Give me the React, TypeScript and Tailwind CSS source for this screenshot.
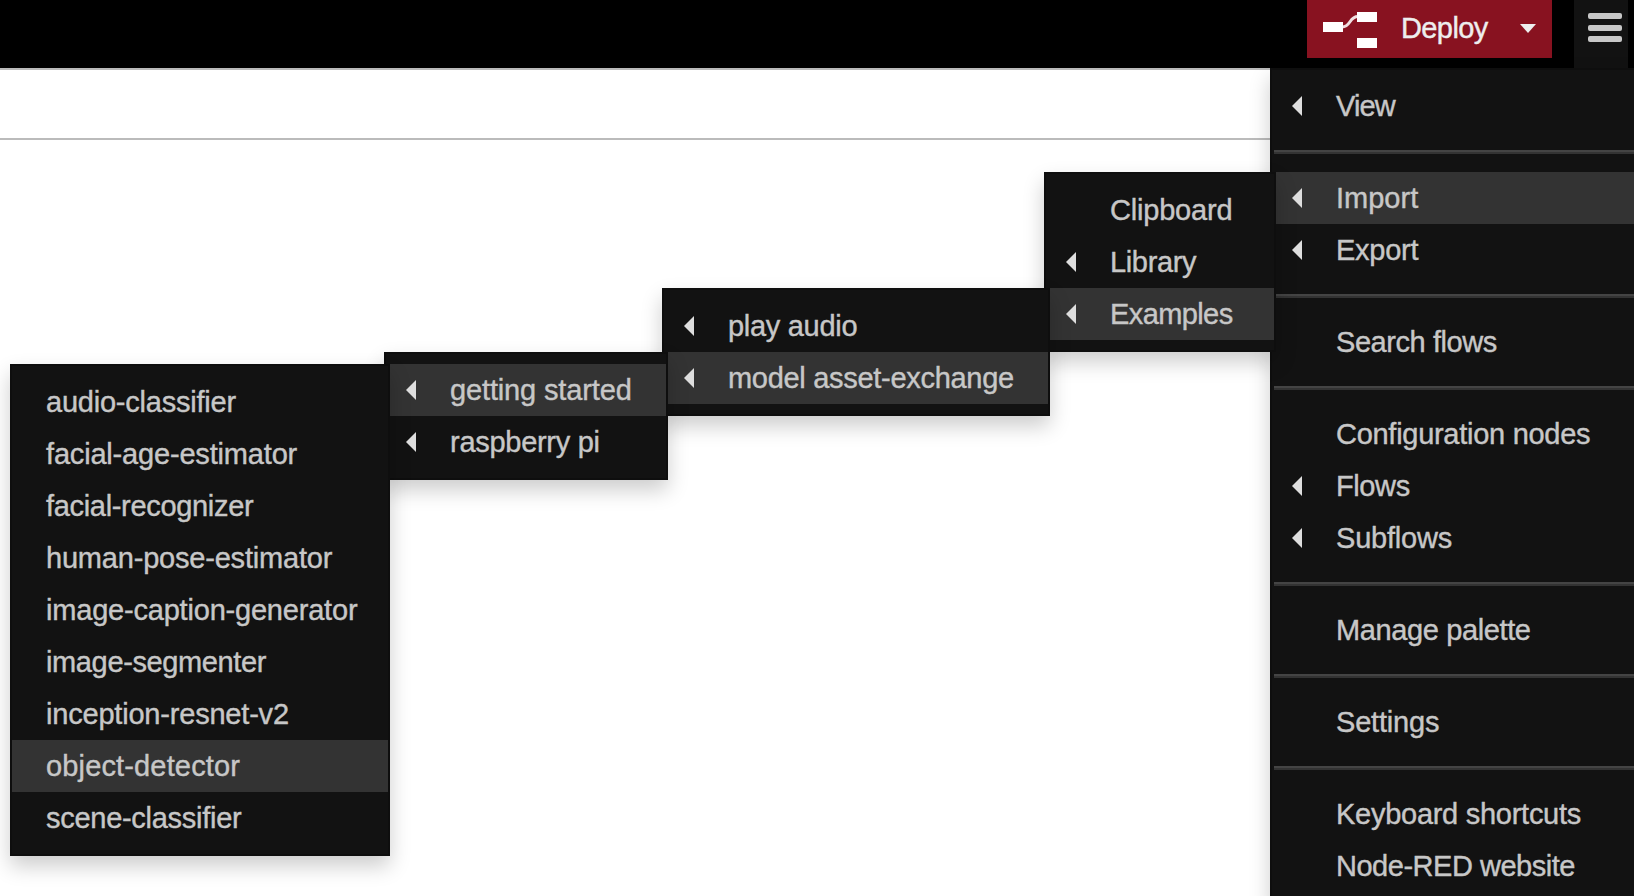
import React from "react";

type Entry = {
  label?: string;
  tracking?: string;
  separator?: boolean;
  arrow?: boolean;
  active?: boolean;
  children?: Entry[];
  plain?: boolean;
};

const separator: Entry = { separator: true };

const examples: Entry[] = [
  { label: "audio-classifier", tracking: "tracking-[-0.22px]" },
  { label: "facial-age-estimator", tracking: "tracking-[-0.18px]" },
  { label: "facial-recognizer", tracking: "tracking-[-0.32px]" },
  { label: "human-pose-estimator", tracking: "tracking-[-0.2px]" },
  { label: "image-caption-generator", tracking: "tracking-[-0.2px]" },
  { label: "image-segmenter", tracking: "tracking-[-0.37px]" },
  { label: "inception-resnet-v2", tracking: "tracking-[-0.2px]" },
  { label: "object-detector", tracking: "tracking-[0.15px]", active: true },
  { label: "scene-classifier", tracking: "tracking-[-0.28px]" },
];

const modelAssets: Entry[] = [
  {
    label: "getting started",
    tracking: "tracking-[-0.14px]",
    arrow: true,
    active: true,
    children: examples,
    plain: true,
  },
  { label: "raspberry pi", tracking: "tracking-[-0.28px]", arrow: true },
];

const exampleGroups: Entry[] = [
  { label: "play audio", tracking: "tracking-[-0.3px]", arrow: true },
  {
    label: "model asset-exchange",
    tracking: "tracking-[-0.3px]",
    arrow: true,
    active: true,
    children: modelAssets,
  },
];

const importMenu: Entry[] = [
  { label: "Clipboard", tracking: "tracking-[-0.2px]" },
  { label: "Library", tracking: "tracking-[-0.35px]", arrow: true },
  {
    label: "Examples",
    tracking: "tracking-[-0.6px]",
    arrow: true,
    active: true,
    children: exampleGroups,
  },
];

const mainMenu: Entry[] = [
  { label: "View", tracking: "tracking-[-0.9px]", arrow: true },
  separator,
  { label: "Import", tracking: "tracking-[0px]", arrow: true, active: true, children: importMenu },
  { label: "Export", tracking: "tracking-[-0.25px]", arrow: true },
  separator,
  { label: "Search flows", tracking: "tracking-[-0.43px]" },
  separator,
  { label: "Configuration nodes", tracking: "tracking-[-0.28px]" },
  { label: "Flows", tracking: "tracking-[-0.4px]", arrow: true },
  { label: "Subflows", tracking: "tracking-[-0.2px]", arrow: true },
  separator,
  { label: "Manage palette", tracking: "tracking-[-0.38px]" },
  separator,
  { label: "Settings", tracking: "tracking-[-0.2px]" },
  separator,
  { label: "Keyboard shortcuts", tracking: "tracking-[-0.27px]" },
  { label: "Node-RED website", tracking: "tracking-[-0.48px]" },
];

const submenuWidths: Record<string, string> = {
  Import: "w-[232px]",
  Examples: "w-[388px]",
  "model asset-exchange": "w-[284px]",
  "getting started": "w-[380px]",
};

function MenuList({ entries, plain, className }: { entries: Entry[]; plain?: boolean; className: string }) {
  return (
    <ul
      className={`absolute border-2 border-[#0e0e0e] bg-[#121212] py-2.5 shadow-[0_10px_20px_rgba(0,0,0,0.2)] ${className}`}
    >
      {entries.map((entry, i) =>
        entry.separator ? (
          <li key={i} className="my-[18px] ml-0.5 h-1 border-t-2 border-[#444] bg-[#333]" />
        ) : (
          <li
            key={i}
            className={`flex h-[52px] items-center whitespace-nowrap ${plain ? "pl-[34px]" : "pl-5"} ${
              entry.active ? "bg-[#333]" : ""
            } ${entry.children ? "relative" : ""}`}
          >
            {!plain && (
              <svg className="mr-[34px] h-5 w-2.5 shrink-0" viewBox="0 0 10 20">
                {entry.arrow && <path d="M0 10L10 0V20Z" fill="#dedede" />}
              </svg>
            )}
            <span className={`pt-px [-webkit-text-stroke:0.4px_#c7c7c7] ${entry.tracking}`}>{entry.label}</span>
            {entry.children && (
              <MenuList
                entries={entry.children}
                plain={entry.plain}
                className={`top-0 right-[calc(100%-4px)] ${submenuWidths[entry.label ?? ""]}`}
              />
            )}
          </li>
        ),
      )}
    </ul>
  );
}

function Header() {
  return (
    <header className="flex h-[68px] shrink-0 items-start justify-end bg-black pr-1.5">
      <button className="flex h-[58px] w-[245px] items-start bg-[#881220] pl-4 text-[#eee]">
        <svg className="mt-3 h-9 w-[54px] shrink-0" viewBox="0 0 54 36">
          <path d="M19 15C28 15 26 4.500 35 4.500" fill="none" stroke="#f0dfe1" strokeWidth="3" />
          <path d="M0 10H20V20H0ZM34 0H54V10H34ZM34 26H54V36H34Z" fill="#fff" />
        </svg>
        <span className="ml-6 flex h-14 items-center pt-px text-[29px] tracking-[-0.6px] [-webkit-text-stroke:0.4px_#eee]">
          Deploy
        </span>
        <svg className="mt-6 mr-4 ml-auto h-[9px] w-4" viewBox="0 0 16 9">
          <path d="M0 0H16L8 9Z" fill="#eee" />
        </svg>
      </button>
      <button className="ml-[22px] flex h-[68px] w-[54px] flex-col items-center gap-[5.500px] bg-[#121212] pt-[13px] pl-2">
        <span className="h-1.5 w-[34px] rounded-[2px] bg-[#c7c7c7]" />
        <span className="h-1.5 w-[34px] rounded-[2px] bg-[#c7c7c7]" />
        <span className="h-1.5 w-[34px] rounded-[2px] bg-[#c7c7c7]" />
      </button>
    </header>
  );
}

export default function App() {
  return (
    <div className="relative flex h-[896px] w-[1634px] flex-col overflow-hidden bg-white font-['Liberation_Sans',Arial,sans-serif] text-[29px] leading-none text-[#c7c7c7]">
      <Header />
      <div className="h-[72px] shrink-0 border-y-2 border-[#bbb] bg-white" />
      <main className="flex-1 bg-white" />
      <MenuList entries={mainMenu} className="top-[68px] left-[1270px] w-[380px]" />
    </div>
  );
}
